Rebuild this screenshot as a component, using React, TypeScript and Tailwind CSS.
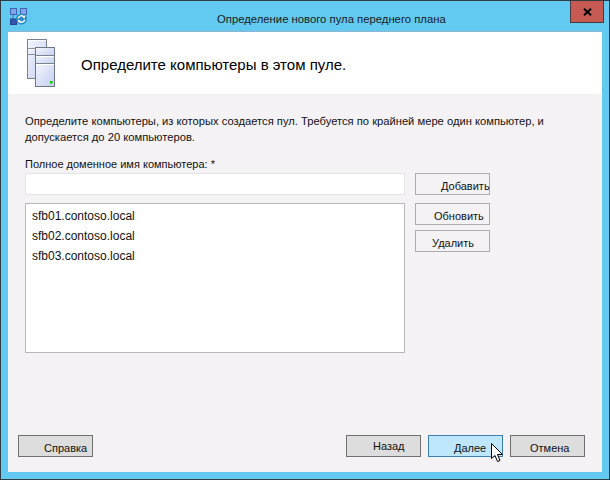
const font = { fontFamily: '"Liberation Sans", Arial, sans-serif' };

function AppIcon() {
  return (
    <svg width="17" height="17" viewBox="0 0 17 17">
      <path d="M3 5 L3 12 M3 3 L13 13 M13 5 L13 8" stroke="#3f63b5" strokeWidth="1" fill="none" />
      <rect x="0.5" y="0.5" width="6" height="6" fill="#7fa6ea" stroke="#3f63b5" />
      <rect x="10.5" y="0.5" width="6" height="6" fill="#7fa6ea" stroke="#3f63b5" />
      <rect x="0.5" y="11" width="6" height="5.5" fill="#2f55ad" stroke="#24448f" />
      <circle cx="11.5" cy="11" r="5.5" fill="#2a8fc7" />
      <path d="M8.3 10.5 a3.2 3.2 0 0 1 5.7 -1.5 M14.7 11.5 a3.2 3.2 0 0 1 -5.7 1.5" stroke="#ffffff" strokeWidth="1.4" fill="none" />
      <path d="M15 7 L15 10 L12.5 10 Z M8 15 L8 12 L10.5 12 Z" fill="#ffffff" />
    </svg>
  );
}

function ServersIcon() {
  return (
    <svg width="28" height="48" viewBox="0 0 28 48">
      <defs>
        <linearGradient id="srv" x1="0" y1="0" x2="1" y2="1">
          <stop offset="0" stopColor="#f4f6fd" />
          <stop offset="1" stopColor="#c3cef0" />
        </linearGradient>
      </defs>
      <rect x="0.5" y="0.5" width="19" height="39" fill="url(#srv)" stroke="#7a8290" />
      <path d="M0.5 9.5 H19.5 M0.5 15.5 H19.5" stroke="#8a909c" />
      <path d="M1.5 1.5 H18.5 M1.5 10.5 H18.5" stroke="#ffffff" />
      <rect x="8.5" y="8.5" width="19" height="39" fill="#e3e8fa" stroke="#6f7784" />
      <rect x="9" y="9" width="18" height="8" fill="url(#srv)" />
      <rect x="9" y="17" width="18" height="8" fill="url(#srv)" />
      <rect x="9" y="25" width="18" height="22" fill="url(#srv)" />
      <path d="M8.5 16.5 H27.5 M8.5 24.5 H27.5" stroke="#7a8290" strokeWidth="1" />
      <path d="M9 17.5 H27 M9 25.5 H27" stroke="#ffffff" strokeWidth="1" />
      <rect x="23" y="42" width="2.5" height="2.5" fill="#00d000" />
    </svg>
  );
}

function CursorIcon() {
  return (
    <svg width="13" height="20" viewBox="0 0 13 20">
      <path d="M0.5 0.5 V15.5 L4 12.5 L6.5 18.5 L9 17.5 L6.5 11.5 L11.5 11.5 Z" fill="#ffffff" stroke="#000000" strokeWidth="1" />
    </svg>
  );
}

function Btn({ label, className, textClass }: { label: string; className: string; textClass: string }) {
  return (
    <button className={`flex h-[22px] w-[75px] items-center whitespace-nowrap border text-[11px] ${className}`}>
      <span className={textClass}>{label}</span>
    </button>
  );
}

export default function App() {
  return (
    <div style={font} className="relative flex h-[480px] w-[610px] flex-col overflow-hidden border border-[#2f3b42] bg-[#62caf0] text-[11.2px] leading-[16px] text-[#111]">
      <div className="relative flex h-[30px] shrink-0 items-center pl-[9px]">
        <AppIcon />
        <div className="ml-[190px] pt-[6px] text-[11.3px] text-[#1a1a1a]">Определение нового пула переднего плана</div>
        <div className="absolute right-[5px] top-0 flex h-[22px] w-[34px] items-center justify-center border border-t-0 border-[#4a3c3c] bg-[#c75a52]">
          <svg width="9" height="8" viewBox="0 0 9 8">
            <path d="M1 0.8 L8 7.2 M8 0.8 L1 7.2" stroke="#000" strokeWidth="2" />
          </svg>
        </div>
      </div>

      <div className="mx-[7px] flex h-[441px] flex-col border-t border-[#8fb4cc] bg-[#f5f2f6]">
        <div className="flex h-[62px] shrink-0 items-start bg-white pl-[19px] pt-[7px]">
          <ServersIcon />
          <div className="ml-[26px] mt-[15px] text-[15px] leading-[22px] text-black">Определите компьютеры в этом пуле.</div>
        </div>

        <div className="flex flex-col pl-[17px] pr-[18px] pt-[19px]">
          <p className="w-[560px] leading-[16px]">
            Определите компьютеры, из которых создается пул. Требуется по крайней мере один компьютер, и допускается до 20 компьютеров.
          </p>
          <div className="mt-[11px] text-[11px] leading-[16px]">Полное доменное имя компьютера: *</div>

          <div className="mt-[1px] flex items-start gap-[10px]">
            <div className="flex flex-col gap-[8px]">
              <div className="h-[22px] w-[380px] border border-[#e6e3ea] bg-white" />
              <div className="flex h-[150px] w-[380px] flex-col gap-[4px] border border-[#b8b8b8] bg-white pl-[6px] pt-[4px] text-[12px]">
                <div>sfb01.contoso.local</div>
                <div>sfb02.contoso.local</div>
                <div>sfb03.contoso.local</div>
              </div>
            </div>
            <div className="flex flex-col gap-[5px]">
              <Btn label="Добавить" className="mb-[3px] border-[#adadad] bg-[#f4f2f4]" textClass="ml-[25px] mt-[4px]" />
              <Btn label="Обновить" className="border-[#adadad] bg-[#f4f2f4]" textClass="ml-[18px] mt-[3px]" />
              <Btn label="Удалить" className="border-[#adadad] bg-[#f4f2f4]" textClass="ml-[16px] mt-[3px]" />
            </div>
          </div>
        </div>

        <div className="mt-auto flex items-center gap-[7px] pb-[15px] pl-[10px] pr-[17px]">
          <Btn label="Справка" className="mr-auto border-[#707070] bg-[#dddddd]" textClass="ml-[25px] mt-[3px]" />
          <Btn label="Назад" className="border-[#707070] bg-[#dddddd]" textClass="ml-[26px]" />
          <Btn label="Далее" className="border-[#3c7fb1] bg-[#bee6fd]" textClass="ml-[25px] mt-[3px]" />
          <Btn label="Отмена" className="border-[#707070] bg-[#dddddd]" textClass="ml-[19px] mt-[3px]" />
        </div>
      </div>

      <div className="absolute left-[490px] top-[442px]">
        <CursorIcon />
      </div>
    </div>
  );
}
